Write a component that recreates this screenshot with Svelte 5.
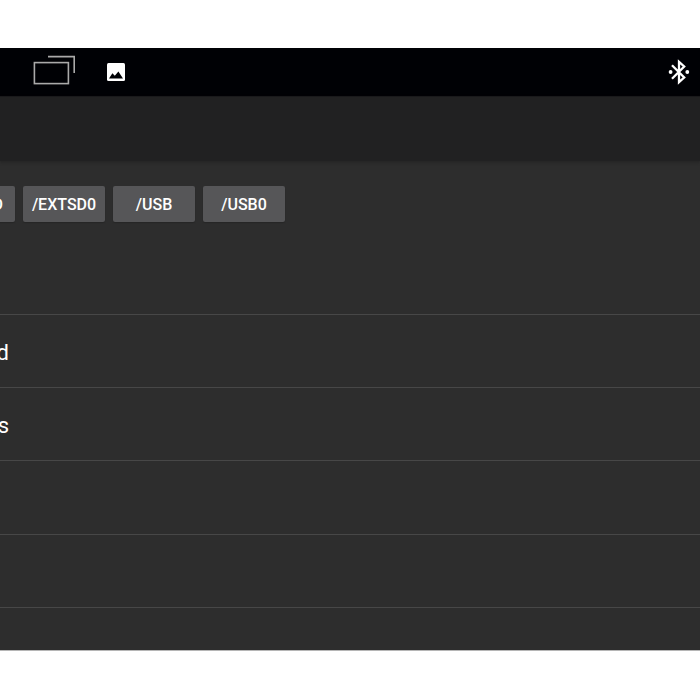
<script>
  const volumes = ['/EXTSD0', '/USB', '/USB0']

  // each row shows the tail of its name, the list continues to the left
  const rows = ['', 'd', 's', '', '', '']
</script>

<main class="screen">
  <header class="status-bar">
    <svg class="icon-recent" viewBox="0 0 42 30" aria-hidden="true">
      <rect x="1.4" y="7.6" width="34" height="21" />
      <path d="M15 1.6H41.2V18" />
    </svg>
    <svg class="icon-image" viewBox="0 0 18 18" aria-hidden="true">
      <rect width="18" height="18" rx="1.5" fill="#fff" />
      <path d="M2 15.5 5.4 10.2 7.8 12.8 11.4 8.6 16 15.5z" fill="#000105" />
    </svg>
    <svg class="icon-bluetooth" viewBox="0 0 22 26" aria-hidden="true">
      <path d="M4 6.2 16.2 18.5 11 23.2V2.8L16.2 7.5 4 19.8" />
      <circle cx="2.6" cy="13" r="1.9" />
      <circle cx="19.3" cy="13" r="1.9" />
    </svg>
  </header>

  <div class="toolbar"></div>

  <nav class="volumes">
    <button class="volume volume-cut">D</button>
    {#each volumes as name}
      <button class="volume">{name}</button>
    {/each}
  </nav>

  <ul class="rows">
    {#each rows as name}
      <li><span>{name}</span></li>
    {/each}
  </ul>
</main>

<style>
  :global(body) {
    margin: 0;
    background: #fff;
  }

  .screen {
    margin: 48px 0;
    overflow: hidden;
    background: #2d2d2d;
    border-bottom: 1px solid #b5b5b5;
    color: #fff;
    font-family: Roboto, sans-serif;
  }

  .status-bar {
    display: flex;
    align-items: center;
    height: 48px;
    padding: 0 10px 0 33px;
    background: #000105;
    border-bottom: 1px solid #19191b;
  }

  .icon-recent {
    width: 42px;
    height: 30px;
    margin-bottom: 4px;
    fill: none;
    stroke: #aaa;
    stroke-width: 1.6;
  }

  .icon-image {
    width: 18px;
    height: 18px;
    margin-left: 32px;
  }

  .icon-bluetooth {
    width: 22px;
    height: 26px;
    margin-left: auto;
    fill: none;
    stroke: #fff;
    stroke-width: 2.3;
  }

  .icon-bluetooth circle {
    fill: #fff;
    stroke: none;
  }

  .toolbar {
    height: 64px;
    background: #212122;
    box-shadow: 0 1px 3px #222;
  }

  .volumes {
    display: flex;
    gap: 8px;
    padding: 25px 0 19px;
  }

  .volume {
    box-sizing: border-box;
    width: 82px;
    height: 36px;
    padding: 0;
    border: 0;
    border-radius: 2px;
    background: #565658;
    box-shadow: 0 1px 1px #262626;
    color: #fff;
    font: 500 16px Roboto, sans-serif;
  }

  .volume-cut {
    display: flex;
    align-items: center;
    justify-content: flex-end;
    width: 15px;
    padding-right: 12px;
    border-radius: 0 2px 2px 0;
    overflow: hidden;
  }

  .rows {
    margin: 0;
    padding: 0;
    list-style: none;
  }

  li {
    box-sizing: border-box;
    display: flex;
    align-items: center;
    height: 73px;
    padding-top: 2px;
    border-bottom: 1px solid #474747;
    font-size: 22px;
  }

  li:nth-child(3n + 1) {
    height: 74px;
  }

  /* right edge of the name column */
  li span {
    display: flex;
    justify-content: flex-end;
    width: 9px;
  }

  li:last-child {
    height: 42px;
    border-bottom: 0;
  }
</style>
